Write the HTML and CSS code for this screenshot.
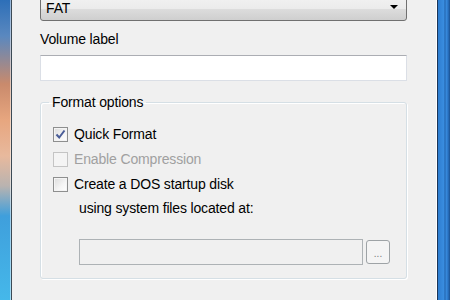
FILE: index.html
```html
<!DOCTYPE html>
<html lang="en">
  <head>
    <meta charset="UTF-8" />
    <title>Format</title>
    <link rel="stylesheet" href="styles.css">
  </head>
  <body>
    <!-- window frame, left side -->
    <div class="frame-left"></div>

    <div class="content">
      <div class="dropdown">
        <span class="value">FAT</span>
        <span class="arrow"></span>
      </div>

      <div class="label">Volume label</div>
      <div class="textbox"></div>

      <fieldset class="group">
        <legend>Format options</legend>
        <div class="row">
          <span class="check checked">
            <svg width="11" height="11" viewBox="0 0 11 11">
              <path d="M1.5 5.5 L4.2 8.5 L9.5 1.5" fill="none" stroke="#4a5d98" stroke-width="2" />
            </svg>
          </span>
          <span>Quick Format</span>
        </div>
        <div class="row disabled">
          <span class="check"></span>
          <span>Enable Compression</span>
        </div>
        <div class="row">
          <span class="check"></span>
          <span>Create a DOS startup disk</span>
        </div>
        <div class="sub">using system files located at:</div>
        <div class="path-row">
          <div class="path"></div>
          <div class="browse">...</div>
        </div>
      </fieldset>
    </div>

    <!-- window frame, right side -->
    <div class="frame-right"></div>
  </body>
</html>
```

FILE: styles.css
```css
body {
  margin: 0;
  width: 450px;
  height: 300px;
  overflow: hidden;
  display: flex;
  background: #f0f0f0;
  font-family: "Liberation Sans", Arial, sans-serif;
  font-size: 14px;
  letter-spacing: -0.15px;
  line-height: 18px;
  color: #000;
}

.frame-left {
  width: 11px;
  flex-shrink: 0;
  border-right: 1px solid #3c4a55;
  box-shadow: inset -1px 0 0 rgba(255, 255, 255, 0.5);
  background: linear-gradient(
    to bottom,
    #2d6fb8 0%,
    #5a88bf 12%,
    #c98a6c 28%,
    #e7a67f 40%,
    #e8b99d 52%,
    #b9b3b0 62%,
    #3f9fdc 72%,
    #45b8ea 100%
  );
}

.frame-right {
  width: 12px;
  flex-shrink: 0;
  border-left: 1px solid #1c3556;
  box-shadow: -1px 0 0 #ffffff;
  background: linear-gradient(
    to right,
    #2e7dd0 0,
    #3a8ee0 6px,
    #1f5fa8 7px,
    #3a8ee0 8px,
    #2a74c4 10px,
    #1a4f8e 12px
  );
}

.content {
  flex: 1;
  padding: 0 30px 0 28px;
}

/* combo box */
.dropdown {
  margin-top: -4px;
  height: 25px;
  box-sizing: border-box;
  border: 1px solid #707070;
  border-radius: 3px;
  background: linear-gradient(to bottom, #f2f2f2 0%, #ebebeb 50%, #dddddd 51%, #cfcfcf 100%);
  display: flex;
  align-items: flex-start;
  justify-content: space-between;
  padding: 2px 8px 0 5px;
}

.arrow {
  width: 0;
  height: 0;
  border-left: 4px solid transparent;
  border-right: 4px solid transparent;
  border-top: 4px solid #000;
  margin-top: 6px;
}

.label {
  margin-top: 9px;
}

.textbox {
  margin-top: 7px;
  height: 24px;
  border: 1px solid #dbdfe6;
  border-top-color: #abadb3;
  background: #fff;
}

/* group box */
.group {
  margin: 12px 0 0;
  padding: 0 0 13px 0;
  border: 1px solid #d5dfe5;
  border-radius: 3px;
  box-shadow: inset 1px 1px 0 #fff, 1px 1px 0 #fff;
}

.group legend {
  margin-left: 8px;
  padding: 0 3px;
}

.row {
  display: flex;
  align-items: center;
  gap: 6px;
  padding-left: 12px;
  margin-top: 7px;
}

.row:first-of-type {
  margin-top: 14px;
}

.check {
  width: 13px;
  height: 13px;
  border: 1px solid #8e8f8f;
  background: linear-gradient(135deg, #dcdcdc 0%, #f5f5f5 60%, #ffffff 100%);
  box-shadow: inset 0 0 0 1px #f4f4f4;
  display: flex;
  align-items: center;
  justify-content: center;
}

.row.disabled {
  color: #a0a0a0;
}

.row.disabled .check {
  border-color: #c4c4c4;
  background: #f4f4f4;
  box-shadow: none;
}

.sub {
  padding-left: 38px;
  margin-top: 6px;
}

.path-row {
  display: flex;
  gap: 3px;
  padding-left: 38px;
  margin-top: 22px;
}

.path {
  width: 282px;
  height: 24px;
  border: 1px solid #adb2b5;
  background: #f0f0f0;
}

.browse {
  width: 22px;
  height: 22px;
  margin-top: 1px;
  border: 1px solid #9ea3a6;
  border-radius: 3px;
  background: #f4f4f4;
  color: #7a7a7a;
  font-size: 10px;
  line-height: 26px;
  text-align: center;
  letter-spacing: 0;
}
```
